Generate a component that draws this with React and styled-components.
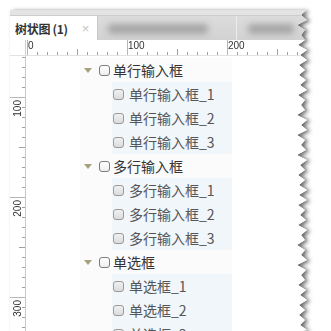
import React from "react";
import styled, { createGlobalStyle } from "styled-components";

const GlobalStyle = createGlobalStyle`
    html, body {
        margin: 0;
        padding: 0;
        background: #ffffff;
    }
    body {
        font-family: "Noto Sans CJK SC", "Noto Sans", sans-serif;
    }
`;

const WIN_W = 300;
const WIN_H = 321;

// torn right edge of the screenshot
const tornEdge = () => {
    const pts = ["0px 0px"];
    let i = 0;
    for (let y = 0; y <= WIN_H; y += 5) {
        const x =
            i % 2
                ? 289 + Math.round(2 * Math.sin(i * 1.7))
                : 296 + Math.round(1.5 * Math.sin(i * 0.9));
        pts.push(`${x}px ${y}px`);
        i++;
    }
    pts.push(`292px ${WIN_H}px`, `0px ${WIN_H}px`);
    return `polygon(${pts.join(",")})`;
};

const groups = [
    { name: "单行输入框", items: ["单行输入框_1", "单行输入框_2", "单行输入框_3"] },
    { name: "多行输入框", items: ["多行输入框_1", "多行输入框_2", "多行输入框_3"] },
    { name: "单选框", items: ["单选框_1", "单选框_2", "单选框_3"] }
];

const hTicks = [];
for (let x = 1; x < 280; x += 10) {
    const n = (x - 1) / 10;
    hTicks.push({ pos: x, size: n % 10 === 0 ? 16 : n % 5 === 0 ? 6 : 3 });
}
const hLabels = [
    { pos: 1, text: "0" },
    { pos: 101, text: "100" },
    { pos: 201, text: "200" }
];

const vTicks = [];
for (let y = 1; y < 280; y += 10) {
    const n = (y - 41 + 100) / 10;
    vTicks.push({ pos: y, size: n % 10 === 0 ? 16 : n % 5 === 0 ? 6 : 3 });
}
const vLabels = [
    { pos: 44, text: "100" },
    { pos: 144, text: "200" },
    { pos: 244, text: "300" }
];

const App = () => (
    <Page>
        <GlobalStyle />
        <Shadow>
            <Window style={{ clipPath: tornEdge() }}>
                <TopStrip />
                <TabBar>
                    <ActiveTab>
                        <TabTitle>树状图 (1)</TabTitle>
                        <TabClose>×</TabClose>
                    </ActiveTab>
                    <InactiveTabs>
                        <Blob $left={10} $width={100} />
                        <TabDivider $left={138} />
                        <Blob $left={150} $width={46} />
                    </InactiveTabs>
                </TabBar>
                <Workspace>
                    <Corner />
                    <HRuler>
                        {hTicks.map((t) => (
                            <HTick key={t.pos} $size={t.size} style={{ left: t.pos }} />
                        ))}
                        {hLabels.map((l) => (
                            <HLabel key={l.text} style={{ left: l.pos + 1 }}>
                                {l.text}
                            </HLabel>
                        ))}
                    </HRuler>
                    <VRuler>
                        {vTicks.map((t) => (
                            <VTick key={t.pos} $size={t.size} style={{ top: t.pos }} />
                        ))}
                        {vLabels.map((l) => (
                            <VLabel key={l.text} style={{ top: l.pos }}>
                                {l.text}
                            </VLabel>
                        ))}
                    </VRuler>
                    <Canvas>
                        <Tree>
                            {groups.map((g) => (
                                <Group key={g.name}>
                                    <ParentRow>
                                        <Caret />
                                        <Check />
                                        <ParentLabel>{g.name}</ParentLabel>
                                    </ParentRow>
                                    <Children>
                                        {g.items.map((item) => (
                                            <ChildRow key={item}>
                                                <Check $child />
                                                <ChildLabel>{item}</ChildLabel>
                                            </ChildRow>
                                        ))}
                                    </Children>
                                </Group>
                            ))}
                        </Tree>
                    </Canvas>
                </Workspace>
            </Window>
        </Shadow>
    </Page>
);

export default App;

const Page = styled.div`
    width: 331px;
    height: 331px;
    overflow: hidden;
    padding: 10px 0 0 10px;
    box-sizing: border-box;
    background: #ffffff;
`;

const Shadow = styled.div`
    width: ${WIN_W}px;
    height: ${WIN_H}px;
    filter: drop-shadow(3px 1px 2px rgba(0, 0, 0, 0.6));
`;

const Window = styled.div`
    width: ${WIN_W}px;
    height: ${WIN_H}px;
    background: #ffffff;
    display: flex;
    flex-direction: column;
    overflow: hidden;
`;

const TopStrip = styled.div`
    height: 5px;
    background: #e3e3e3;
    border-bottom: 1px solid #cdcdcd;
`;

const TabBar = styled.div`
    height: 24px;
    display: flex;
    background: #d9d9d9;
`;

const ActiveTab = styled.div`
    width: 87px;
    display: flex;
    align-items: center;
    padding-left: 5px;
    box-sizing: border-box;
    background: #ffffff;
`;

const TabTitle = styled.span`
    font-family: "Noto Sans CJK SC", "Liberation Sans", sans-serif;
    font-size: 12px;
    font-weight: bold;
    color: #333333;
    letter-spacing: -0.3px;
`;

const TabClose = styled.span`
    margin-left: 14px;
    font-family: "Liberation Sans", sans-serif;
    font-size: 13px;
    color: #c4c4c4;
`;

const InactiveTabs = styled.div`
    flex: 1;
    position: relative;
    background: linear-gradient(#dcdcdc, #d2d2d2);
    border-left: 1px solid #c8c8c8;
`;

const Blob = styled.div`
    position: absolute;
    top: 8px;
    left: ${(p) => p.$left}px;
    width: ${(p) => p.$width}px;
    height: 10px;
    border-radius: 4px;
    background: #a6a6a6;
    filter: blur(3px);
`;

const TabDivider = styled.div`
    position: absolute;
    top: 0;
    bottom: 0;
    left: ${(p) => p.$left}px;
    width: 1px;
    background: #ececec;
`;

const Workspace = styled.div`
    flex: 1;
    display: grid;
    grid-template-columns: 16px 1fr;
    grid-template-rows: 16px 1fr;
    min-height: 0;
`;

const Corner = styled.div`
    background: #ffffff;
    border-right: 1px solid #d0d0d0;
    border-bottom: 1px solid #e2e2e2;
`;

const HRuler = styled.div`
    position: relative;
    background: #ffffff;
    border-bottom: 1px solid #e2e2e2;
    overflow: hidden;
`;

const HTick = styled.div`
    position: absolute;
    bottom: 0;
    width: 1px;
    height: ${(p) => p.$size}px;
    background: ${(p) => (p.$size > 10 ? "#b5b5b5" : "#a0a0a0")};
`;

const HLabel = styled.span`
    position: absolute;
    top: 0;
    font-family: "Liberation Sans", sans-serif;
    font-size: 10px;
    line-height: 11px;
    color: #333333;
`;

const VRuler = styled.div`
    position: relative;
    background: #ffffff;
    border-right: 1px solid #c8c8c8;
    overflow: hidden;
`;

const VTick = styled.div`
    position: absolute;
    right: 0;
    height: 1px;
    width: ${(p) => p.$size}px;
    background: ${(p) => (p.$size > 10 ? "#b5b5b5" : "#a0a0a0")};
`;

const VLabel = styled.span`
    position: absolute;
    left: 2px;
    writing-mode: vertical-rl;
    transform: rotate(180deg);
    font-family: "Liberation Sans", sans-serif;
    font-size: 10px;
    line-height: 11px;
    color: #333333;
`;

const Canvas = styled.div`
    position: relative;
    background: #ffffff;
    overflow: hidden;
    padding: 2px 0 0 54px;
`;

const Tree = styled.div`
    display: flex;
    flex-direction: column;
    width: 152px;
`;

const Group = styled.div`
    display: flex;
    flex-direction: column;
    background: #fbfbfb;
`;

const ParentRow = styled.div`
    height: 24px;
    display: flex;
    align-items: center;
    padding-left: 4px;
`;

const Caret = styled.span`
    width: 0;
    height: 0;
    border-left: 4px solid transparent;
    border-right: 4px solid transparent;
    border-top: 5px solid #a3a27a;
    margin-right: 7px;
    margin-top: 1px;
`;

const Check = styled.span`
    width: 9px;
    height: 9px;
    border: 1px solid ${(p) => (p.$child ? "#9a9a9a" : "#7d7d7d")};
    border-radius: 3px;
    background: ${(p) =>
        p.$child
            ? "linear-gradient(#f0f0f0, #dcdcdc)"
            : "linear-gradient(#ffffff, #eeeeee)"};
    margin-right: 3px;
    flex-shrink: 0;
`;

const ParentLabel = styled.span`
    font-size: 14px;
    color: #333333;
    white-space: nowrap;
`;

const Children = styled.div`
    margin-left: 32px;
    background: #f0f6fa;
    display: flex;
    flex-direction: column;
`;

const ChildRow = styled.div`
    height: 24px;
    display: flex;
    align-items: center;
    padding-left: 1px;
    gap: 2px;
`;

const ChildLabel = styled.span`
    font-size: 14px;
    color: #555555;
    white-space: nowrap;
`;
